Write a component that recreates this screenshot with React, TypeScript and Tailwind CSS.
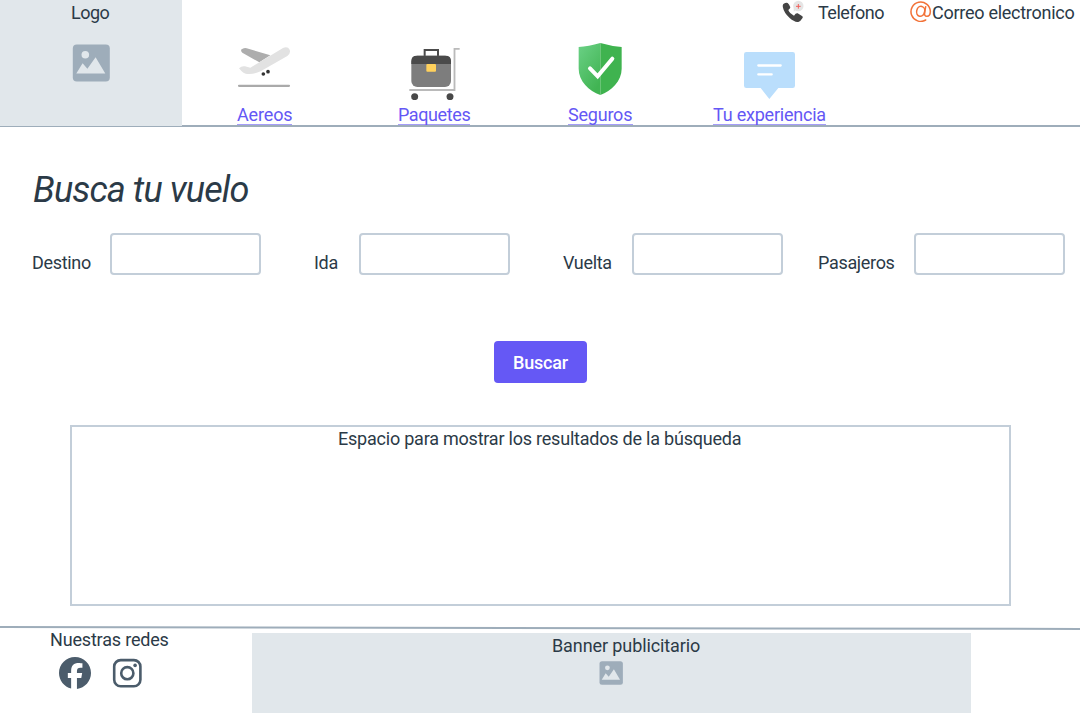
import type { ReactNode } from "react";
import { FaFacebook } from "react-icons/fa6";

function ImageIcon({ className }: { className: string }) {
  return (
    <svg viewBox="0 0 38 38" preserveAspectRatio="none" className={className}>
      <rect x="0.8" y="0.5" width="37" height="37" rx="4" fill="#9eadba" />
      <circle cx="13.3" cy="10.8" r="3.8" fill="#e1e7eb" />
      <path d="M4.3 29.6 10.6 19.3 15.4 24.8 23.6 13.2 33.3 29.6Z" fill="#e1e7eb" />
    </svg>
  );
}

function PlaneIcon() {
  return (
    <svg viewBox="51 15 165 180" className="h-[60px] w-[55px]">
      <path d="M63 44Q72 37 80 40L151 61 118 82 67 53Q63 50 63 44Z" fill="#adadad" />
      <path d="M57 100Q65 92 75 94L91 98 189 39Q203 33 209 44 213 55 202 63L122 109Q101 119 77 116 70 114 65 109Z" fill="#e2e2e2" />
      <circle cx="130" cy="117" r="5.5" fill="#333" />
      <circle cx="144" cy="110" r="5.5" fill="#333" />
      <path d="M57 152.500H207" stroke="#aaa" strokeWidth="6.500" strokeLinecap="round" />
    </svg>
  );
}

function LuggageIcon() {
  return (
    <svg viewBox="24 15 216 180" className="h-[60px] w-[72px]">
      <path d="M104 64V45H144V64" fill="none" stroke="#4b4b4b" strokeWidth="6" />
      <rect x="64" y="62" width="119" height="94" rx="18" fill="#7d7d7d" />
      <path d="M64 87V78Q64 62 80 62H167Q183 62 183 78V87Z" fill="#4a4a4a" />
      <rect x="109" y="87" width="29" height="23" rx="3" fill="#ffd15c" />
      <path d="M209 41.500H193.500V165H58" fill="none" stroke="#bababa" strokeWidth="5.500" />
      <circle cx="74" cy="185" r="10.500" fill="#484848" />
      <circle cx="180" cy="185" r="10.500" fill="#484848" />
    </svg>
  );
}

function ShieldIcon() {
  return (
    <svg viewBox="54 15 195 180" className="h-[60px] w-[65px]">
      <defs>
        <linearGradient id="shield" x1="0" y1="0" x2="0.6" y2="1">
          <stop offset="0" stopColor="#6bd186" />
          <stop offset="1" stopColor="#41b453" />
        </linearGradient>
      </defs>
      <path d="M151 24Q115 34 86 36V101C86 139 117 167 151 180Z" fill="url(#shield)" />
      <path d="M151 24Q186 34 215 36V101C215 139 184 167 151 180Z" fill="#3fb34f" />
      <path d="M120 100 143 124 187 71" fill="none" stroke="#fff" strokeWidth="12" strokeLinecap="round" />
    </svg>
  );
}

function CommentIcon() {
  return (
    <svg viewBox="39 15 339 180" className="h-[60px] w-[113px]">
      <path d="M139 51H278Q285 51 285 58V152Q285 159 278 159H235L208 192 182 159H139Q132 159 132 152V58Q132 51 139 51Z" fill="#badefc" />
      <path d="M175 91.500H242M175 118H215" stroke="#fff" strokeWidth="7" strokeLinecap="round" />
    </svg>
  );
}

function PhoneIcon() {
  return (
    <svg viewBox="0 0 66 66" className="h-[22px] w-[22px]">
      <circle cx="49" cy="18" r="15.500" fill="#e5e5e5" />
      <path d="M35 25V35L42 30Z" fill="#e5e5e5" />
      <path d="M49 12V26M42 19H56" stroke="#f0605c" strokeWidth="3" />
      <path
        d="M4 12Q12 7 17 9 21 12 25 22 25 26 19 30 22 39 36 47 42 38 47 40L60 48Q64 51 61 55 56 64 49 66 38 67 23 54 6 38 3 23 1 16 4 12Z"
        fill="#444"
      />
    </svg>
  );
}

function AtIcon() {
  return (
    <svg viewBox="0 0 66 66" className="h-[22px] w-[22px]" fill="none" stroke="#f27238" strokeLinecap="round">
      <path d="M47 60A29 29 0 1 1 61 34C61 43 57 49 51 49 44 49 43 44 44 37L47 20" strokeWidth="4.600" />
      <ellipse cx="32" cy="34" rx="12" ry="15" transform="rotate(14 32 34)" strokeWidth="4.600" />
    </svg>
  );
}

function InstagramIcon() {
  return (
    <svg viewBox="0 0 30 30" className="h-[30px] w-[30px]" fill="none" stroke="#4b5c6b">
      <rect x="2.200" y="2.100" width="26.200" height="26.200" rx="6.500" strokeWidth="2.600" />
      <circle cx="15.300" cy="15.200" r="6.100" strokeWidth="2.600" />
      <circle cx="23.100" cy="7.400" r="1.800" fill="#4b5c6b" stroke="none" />
    </svg>
  );
}

function NavLink({ className, label, children }: { className: string; label: string; children: ReactNode }) {
  return (
    <a href="#" className={`flex flex-col whitespace-nowrap text-[#6457f5] ${className}`}>
      {children}
      <span className="mt-[3px] block h-[22px] border-b border-[#a59df9] leading-[24px]">{label}</span>
    </a>
  );
}

function Field({ label, className, labelClass }: { label: string; className: string; labelClass: string }) {
  return (
    <label className={`flex ${className}`}>
      <span className={`pt-[18px] leading-6 whitespace-nowrap ${labelClass}`}>{label}</span>
      <input className="h-[42px] w-[151px] rounded-[4px] border-2 border-[#c3ced9] bg-white px-2 outline-none" />
    </label>
  );
}

export default function App() {
  return (
    <div className="flex h-[713px] w-[1080px] flex-col overflow-hidden bg-white font-['Roboto',sans-serif] text-[18px] tracking-[-0.22px] text-[#2b3a47]">
      <header className="flex h-[127px] shrink-0">
        <div className="flex w-[182px] flex-col border-b border-[#9eadba] bg-[#e1e7eb]">
          <span className="ml-[71px] leading-[26px] tracking-[-0.5px]">Logo</span>
          <ImageIcon className="mt-[18px] ml-[72px] h-[38px] w-[38px]" />
        </div>
        <div className="flex flex-1 flex-col border-b-2 border-[#9eadba]">
          <div className="flex h-[26px] pl-[600px] leading-[26px] whitespace-nowrap">
            <PhoneIcon />
            <span className="ml-[14px] w-[92px] tracking-[-0.5px]">Telefono</span>
            <AtIcon />
            <span className="tracking-[-0.27px]">Correo electronico</span>
          </div>
          <nav className="flex pt-[14px] pl-[55px]">
            <NavLink label="Aereos" className="w-[55px] tracking-[-0.15px]"><PlaneIcon /></NavLink>
            <NavLink label="Paquetes" className="ml-[106px] w-[72px] tracking-[-0.4px]"><LuggageIcon /></NavLink>
            <NavLink label="Seguros" className="ml-[98px] w-[65px]"><ShieldIcon /></NavLink>
            <NavLink label="Tu experiencia" className="ml-[80px] w-[113px]"><CommentIcon /></NavLink>
          </nav>
        </div>
      </header>

      <main className="flex flex-col">
        <h1 className="mt-[39px] ml-8 h-[47px] pl-px text-[36px] leading-[48px] tracking-[-0.88px] italic">Busca tu vuelo</h1>
        <form className="mt-5 flex flex-col">
          <div className="flex pl-8">
            <Field label="Destino" className="" labelClass="w-[78px] tracking-[-0.32px]" />
            <Field label="Ida" className="ml-[53px]" labelClass="w-[45px] tracking-[-0.32px]" />
            <Field label="Vuelta" className="ml-[53px]" labelClass="w-[69px] tracking-[-0.35px]" />
            <Field label="Pasajeros" className="ml-[35px]" labelClass="w-[96px] tracking-[-0.32px]" />
          </div>
          <button type="button" className="mt-[66px] ml-[494px] h-[42px] w-[93px] rounded-[4px] bg-[#6558f5] font-medium text-white">
            Buscar
          </button>
        </form>
        <section className="mt-[42px] ml-[70px] h-[181px] w-[941px] border-2 border-[#c3ced9] pl-[266px] leading-6 whitespace-nowrap">
          Espacio para mostrar los resultados de la búsqueda
        </section>
      </main>

      <footer className="mt-[21px] flex flex-col">
        <div className="h-[2px] skew-y-[0.1deg] bg-[#9eadba]" />
        <div className="flex">
          <div className="w-[252px] pl-[50px]">
            <p className="h-[23px] leading-[22px] tracking-[-0.18px]">Nuestras redes</p>
            <div className="mt-[5px] flex pl-[9px]">
              <FaFacebook className="h-8 w-8 text-[#4b5c6b]" />
              <div className="ml-[21px] pt-px"><InstagramIcon /></div>
            </div>
          </div>
          <div className="mt-1 h-[80px] w-[719px] bg-[#e1e7eb] pl-[300px]">
            <p className="h-[26px] leading-[26px] tracking-[-0.1px]">Banner publicitario</p>
            <ImageIcon className="mt-[2px] ml-[47px] h-[24px] w-[24px]" />
          </div>
        </div>
      </footer>
    </div>
  );
}
